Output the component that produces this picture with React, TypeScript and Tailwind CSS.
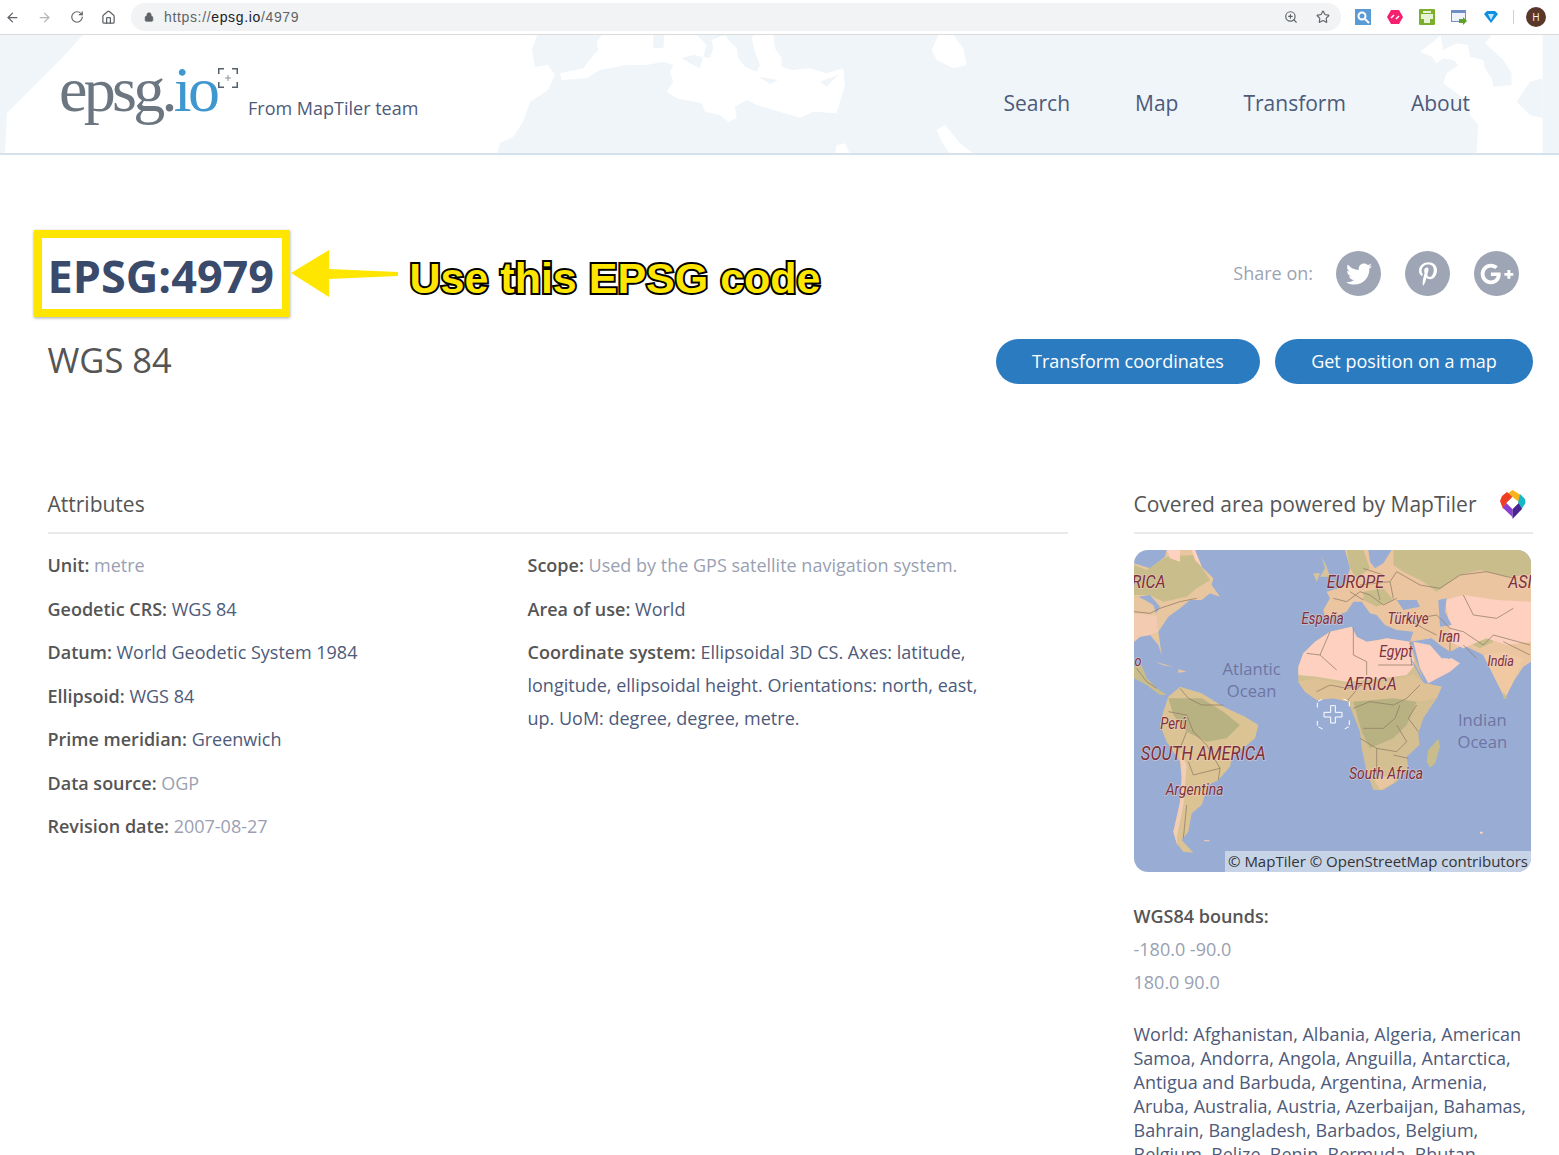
import React from "react";
import { ArrowLeft, ArrowRight, RotateCw, Home, Lock, ZoomIn, Star } from "lucide-react";
import { FaTwitter, FaPinterestP, FaGooglePlusG } from "react-icons/fa";

function BrowserBar() {
  return (
    <div className="flex h-[35px] items-center border-b border-[#d9dadc] bg-white pl-[5px]">
      <ArrowLeft size={15} className="shrink-0 text-[#5f6368]" />
      <ArrowRight size={15} className="ml-[17px] shrink-0 text-[#b4b6b9]" />
      <RotateCw size={14} className="ml-[18px] shrink-0 text-[#5f6368]" />
      <Home size={15} className="ml-[17px] shrink-0 text-[#5f6368]" />
      <div className="ml-[15px] flex h-[28px] w-[1210px] shrink-0 items-center rounded-full bg-[#f1f3f4] pl-[13px] pr-[11px]">
        <Lock size={10} fill="#5f6368" className="text-[#5f6368]" />
        <span className="ml-[10px] font-['Liberation_Sans',sans-serif] text-[14px] tracking-[0.65px] text-[#5f6368]">
          https://<span className="text-[#202124]">epsg.io</span>/4979
        </span>
        <ZoomIn size={14} className="ml-auto text-[#5f6368]" />
        <Star size={14} className="ml-[18px] text-[#5f6368]" />
      </div>
      <div className="ml-[14px] flex shrink-0 items-center gap-[16px]">
        <svg width="16" height="16" viewBox="0 0 16 16">
          <rect width="16" height="16" fill="#5b9bd5" />
          <circle cx="7" cy="7" r="3.5" fill="none" stroke="#fff" strokeWidth="2" />
          <path d="M10 10l4 4" stroke="#fff" strokeWidth="2" />
        </svg>
        <svg width="16" height="16" viewBox="0 0 16 16">
          <path d="M4 1h8l4 7-4 7H4L0 8z" fill="#f5206f" />
          <path d="M4 9l3-3M9 10l3-3" stroke="#fff" strokeWidth="1.5" />
        </svg>
        <svg width="16" height="16" viewBox="0 0 16 16">
          <rect width="16" height="16" rx="1" fill="#7cb02c" />
          <path d="M4 2h8v2H4zM2 5h12v5H2zM5 9h6v5H5z" fill="#e8f2d6" />
        </svg>
        <svg width="16" height="16" viewBox="0 0 16 16">
          <rect x="0.5" y="1.5" width="14" height="11" fill="#eef3fb" stroke="#6f8fc4" />
          <rect x="0.5" y="1.5" width="14" height="2.5" fill="#6f8fc4" />
          <path d="M8 10h4V8l4 4-4 4v-2H8z" fill="#5fa02f" />
        </svg>
        <svg width="16" height="16" viewBox="0 0 16 16">
          <path d="M1 5l3-3h8l3 3-7 9z" fill="#0e8fe0" />
          <path d="M5 5h6l-3 6z" fill="#bfe6ff" />
        </svg>
      </div>
      <div className="ml-[14px] h-[14px] w-px shrink-0 bg-[#d0d1d3]" />
      <div className="ml-[12px] flex h-[20px] w-[20px] shrink-0 items-center justify-center rounded-full bg-[#5a372b] text-[10px] text-white">
        H
      </div>
    </div>
  );
}

function HeaderBackdrop() {
  return (
    <svg className="absolute inset-0" width="1559" height="118" viewBox="0 0 1559 118">
      <g fill="#fff">
        <path d="M83 0H537L532 15 535 32 548 30 555 40 548 55 530 67 523 87 513 102 500 108 497 119H5L7 78 62 23z" />
        {/* these two are in 3x crop space, offset to the crop origin */}
        <g transform="translate(480 0) scale(0.3333)">
          <path d="M240 115L310 100 340 60 355 45 350 20 365 0H520V40H550L553 0H650L680 30 670 65 690 70 700 40 695 15 720 5 735 0 745 15 770 40 775 70 795 95 830 110 840 90 825 50 815 10 820 0H880L885 40 905 70 905 95 935 105 990 100 1040 115 1090 100 1095 150 1070 235 1000 230 960 248 880 225 830 210 800 195 765 215 770 250 745 260 720 240 675 230 665 205 590 190 560 170 580 140 570 110 580 90 550 80 500 90 440 90 360 105 320 130 245 135z" />
          <path d="M1375 0H1420L1450 40 1460 90 1420 100 1370 75 1355 45z" />
          <path d="M1370 285L1395 270 1420 300 1440 325 1480 356H1410L1385 320z" />
          <path d="M1065 356L1070 330 1095 325 1110 356z" />
          <path d="M605 68L640 60 668 66 660 100 630 85z" fill="#eff5f9" />
          <path d="M1020 140L1075 120 1040 155z" fill="#eff5f9" />
          <path d="M835 125L895 135 870 147z" fill="#eff5f9" />
        </g>
        <g transform="translate(1020 0) scale(0.3333)">
          <path d="M1415 0H1568V356H1370L1375 270 1350 240 1345 200 1270 145 1280 115 1315 90 1300 75 1270 70 1250 85 1235 65 1200 50 1240 20 1262 0 1270 45 1310 25 1345 30 1350 65 1390 75 1395 100 1415 130 1420 155 1475 150 1475 115 1450 75 1395 25z" />
          <path d="M1568 130L1530 140 1490 200 1530 240 1568 250z" fill="#eff5f9" />
        </g>
      </g>
    </svg>
  );
}

function SiteHeader() {
  return (
    <header className="relative flex h-[120px] items-start overflow-hidden border-b-2 border-[#d3e2ed] bg-[#eff5f9] pl-[59px] pr-[89px]">
      <HeaderBackdrop />
      <div className="relative mt-[23px] flex w-[159px] font-['Liberation_Serif',serif] text-[64px] leading-none tracking-[-3.7px]">
        <span className="text-[#6b7680]">epsg.</span>
        <span className="text-[#3f97cf]">io</span>
      </div>
      <svg className="relative mt-[33px]" width="20" height="20" viewBox="0 0 20 20">
        <path d="M0 6V0h6M14 0h6v6M20 14v6h-6M6 20H0v-6" fill="none" stroke="#55606b" strokeWidth="3" />
        <path d="M10 7v6M7 10h6" stroke="#8a949c" strokeWidth="1" />
      </svg>
      <span className="relative ml-[10px] mt-[61px] text-[18px] leading-[24px] text-[#4d5a7a]">From MapTiler team</span>
      <nav className="relative ml-auto mt-[53px] flex gap-[65px] text-[21px] leading-[30px] text-[#4d5a7a]">
        <span>Search</span>
        <span>Map</span>
        <span>Transform</span>
        <span>About</span>
      </nav>
    </header>
  );
}

function TitleRow() {
  return (
    <div className="flex justify-between pl-[47.5px] pr-[26px] pt-[91px]">
      <div>
        <div className="relative">
          <h1 className="text-[45px] font-bold leading-[60px] text-[#3a4a6b]">EPSG:4979</h1>
          <div className="absolute left-[-14px] top-[-16px] h-[87px] w-[256px] border-[8px] border-[#ffe600] shadow-[0_1px_3px_rgba(0,0,0,0.35)]" />
          <svg className="absolute left-[242px] top-[-16px]" width="112" height="88" viewBox="0 0 112 88">
            <path d="M1 43L39 20V39L108 42V46L39 49V67z" fill="#ffe600" />
          </svg>
          <span className="absolute left-[362px] top-[4px] whitespace-nowrap font-['Liberation_Sans',sans-serif] text-[43px] font-bold leading-[56px] text-[#ffe600] [-webkit-text-stroke:4px_#000] [paint-order:stroke_fill]">
            Use this EPSG code
          </span>
        </div>
        <h2 className="mt-[29px] text-[34.5px] leading-[50px] text-[#555]">WGS 84</h2>
      </div>
      <div className="flex flex-col items-end">
        <div className="mr-[14px] mt-[5px] flex items-center">
          <span className="mr-[23px] text-[18px] text-[#9ca3b3]">Share on:</span>
          <div className="flex h-[45px] w-[45px] items-center justify-center rounded-full bg-[#9ea5b4] text-white">
            <FaTwitter size={26} />
          </div>
          <div className="ml-[24px] flex h-[45px] w-[45px] items-center justify-center rounded-full bg-[#9ea5b4] text-white">
            <FaPinterestP size={24} />
          </div>
          <div className="ml-[24px] flex h-[45px] w-[45px] items-center justify-center rounded-full bg-[#9ea5b4] text-white">
            <FaGooglePlusG size={34} />
          </div>
        </div>
        <div className="mt-[43px] flex gap-[15px]">
          <button className="h-[45px] w-[264px] rounded-full bg-[#2b7bc0] text-[18px] text-white">Transform coordinates</button>
          <button className="h-[45px] w-[258px] rounded-full bg-[#2b7bc0] text-[18px] text-white">Get position on a map</button>
        </div>
      </div>
    </div>
  );
}

function Attr({ label, value, muted }: { label: string; value: React.ReactNode; muted?: boolean }) {
  return (
    <p className="mb-[10.5px] text-[18px] leading-[33px]">
      <span className="font-semibold text-[#555]">{label}:</span>{" "}
      <span className={muted ? "text-[#9a9fb2]" : "text-[#4d5a7a]"}>{value}</span>
    </p>
  );
}

function Attributes() {
  return (
    <section className="w-[1020px]">
      <h3 className="border-b-2 border-[#eaeaea] pb-[13px] text-[21px] leading-[30px] text-[#555]">Attributes</h3>
      <div className="mt-[15px] grid grid-cols-[480px_460px]">
        <div>
          <Attr label="Unit" value="metre" muted />
          <Attr label="Geodetic CRS" value="WGS 84" />
          <Attr label="Datum" value="World Geodetic System 1984" />
          <Attr label="Ellipsoid" value="WGS 84" />
          <Attr label="Prime meridian" value="Greenwich" />
          <Attr label="Data source" value="OGP" muted />
          <Attr label="Revision date" value="2007-08-27" muted />
        </div>
        <div>
          <Attr label="Scope" value="Used by the GPS satellite navigation system." muted />
          <Attr label="Area of use" value="World" />
          <Attr
            label="Coordinate system"
            value="Ellipsoidal 3D CS. Axes: latitude, longitude, ellipsoidal height. Orientations: north, east, up. UoM: degree, degree, metre."
          />
        </div>
      </div>
    </section>
  );
}

function PlaceLabel({ x, y, size, children }: { x: number; y: number; size: number; children: string }) {
  return (
    <text
      transform={`translate(${x} ${y}) scale(0.85 1)`}
      fontSize={size * 1.17}
      textAnchor="middle"
      fontFamily="Roboto, sans-serif"
      fontStyle="italic"
      fill="#7d2f3a"
      stroke="#f3d5cf"
      strokeWidth={5}
      strokeOpacity={0.55}
      paintOrder="stroke"
    >
      {children}
    </text>
  );
}

function OceanLabel({ x, y, children }: { x: number; y: number; children: string }) {
  return (
    <text x={x} y={y} fontSize={50} textAnchor="middle" fontFamily="'Open Sans', sans-serif" fill="#6f75a3">
      {children}
    </text>
  );
}

// coordinates are in the 3x crop space of the reference, hence the offset viewBox
function CoverageMap() {
  const tan = "#e8c69f";
  const green = "#c9bd8c";
  const forest = "#b8b283";
  const pink = "#fdd0bf";
  const sea = "#99add4";
  return (
    <div className="relative h-[322px] w-[397px] overflow-hidden rounded-[14px] bg-[#99add4]">
      <svg width="397" height="322" viewBox="12 195 1191 966">
        <g className="[filter:blur(0.4px)]">
          {/* north america */}
          <path d="M12 235L60 250 105 215 110 195H195L215 245 250 280 245 300 270 335 240 325 215 345 180 345 150 370 115 395 85 440 95 510 85 480 60 450 30 455 12 470z" fill={tan} />
          <path d="M50 255L110 215 190 210 240 285 200 310 170 335 100 350 60 330 12 330V240z" fill={green} />
          <path d="M110 195H150V230L120 220zM185 195H195L215 245 195 225z" fill={pink} />
          <path d="M12 385L80 392 85 440 60 450 30 455 12 470z" fill="#f2cbb0" />
          <path d="M25 335L60 330 90 365 78 385 70 360 45 345z" fill={sea} />
          <path d="M12 545L35 540 50 580 80 610 110 630 90 630 50 600 12 580z" fill={green} />
          <path d="M75 530L130 545 100 541zM145 553L170 560 145 563z" fill={tan} />
          {/* south america */}
          <path d="M115 635L150 605 215 625 280 665 345 695 385 720 375 760 340 790 310 800 300 845 265 885 235 900 215 960 185 985 175 1040 155 1065 190 1103 160 1100 140 1075 130 1040 150 960 155 880 150 830 110 770 90 720 100 680z" fill="#dcc393" />
          <path d="M115 640L215 640 280 680 330 720 290 760 230 770 170 740 130 690z" fill={forest} />
          <path d="M150 800L170 840 160 960 140 1060 143 1085 130 1040 150 950 155 880z" fill="#f3cdb4" />
          {/* africa */}
          <path d="M505 545L520 505 555 470 600 440 665 425 680 455 710 470 745 465 770 460 840 470 860 530 885 595 935 605 920 640 880 700 865 745 868 780 830 815 835 850 800 890 760 915 730 915 710 860 695 790 690 740 670 690 655 650 610 640 560 645 525 620 505 590z" fill="#d3bf92" />
          <path d="M505 590L560 580 650 600 760 590 850 570 885 595 935 605 920 640 860 650 790 640 670 650 655 650 610 640 560 645 525 620z" fill="#dfc196" />
          <path d="M505 545L520 505 555 470 600 440 665 425 680 455 710 470 745 465 770 460 840 470 855 540 830 570 760 580 650 590 560 575 505 570z" fill={pink} />
          <path d="M670 650L790 640 860 650 830 720 790 760 720 790 695 740z" fill={forest} />
          <path d="M730 880L800 870 790 895 750 915z" fill={tan} />
          <path d="M890 830L895 795 925 762 930 785 915 835 900 848z" fill={green} />
          {/* eurasia */}
          <path d="M580 375L600 340 590 320 640 305 650 285 660 250 645 195H1203V530L1180 545 1150 590 1125 640 1110 610 1085 560 1060 510 1000 480 960 500 930 480 905 460 840 470 850 440 800 435 765 420 740 390 720 385 695 350 670 350 650 380 610 395 585 395z" fill="#ebc5a0" />
          <path d="M790 195H1203V270L1130 275 1050 255 990 270 920 320 880 290 820 260 790 240z" fill={green} />
          <path d="M650 195H700L720 250 680 280 660 250z" fill={green} />
          <path d="M700 320L760 310 790 345 740 365 700 345zM1000 430L1070 440 1090 470 1050 490 1010 470z" fill={green} />
          <path d="M945 345L1000 330 1100 345 1203 350V470L1130 480 1070 460 1000 490 960 470 960 430z" fill={pink} />
          <path d="M850 470L900 480 935 520 965 520 990 535 960 560 895 595 870 550z" fill={pink} />
          <path d="M1060 510L1120 500 1180 520 1150 590 1125 640 1110 610 1085 560z" fill="#f0c8a2" />
          <path d="M1120 620L1132 640 1120 642z" fill={green} />
          <path d="M715 195H785L760 235 735 250 720 230zM800 345L860 345 870 365 820 375zM925 345L950 340 945 380 965 420 930 425zM840 520L850 530 888 597 878 590z" fill={sea} />
          <path d="M920 482L965 518 955 522 915 490z" fill={sea} />
          <path d="M575 215L590 245 600 275 570 275 585 250zM550 265L570 265 560 290z" fill="#d8c39a" />
          <path d="M1050 1040h8v6h-8zM222 1066h16v3h-16z" fill={pink} />
          {/* borders */}
          <path
            d="M600 440L570 510 620 555M530 505L570 510M670 430L670 510 710 530 710 570M745 540L850 540M840 470L845 540M560 620L600 600 650 610 700 600M650 650L700 590M670 670L720 650 790 660 830 640 870 600M700 730L760 730 795 700 810 660M800 720L830 770 800 800 740 790 690 760M740 790L740 880M835 820L790 810M860 660L835 700 865 740M150 610L175 640 215 660 280 660M115 680L170 690 190 740 230 780 270 850 230 860 190 870 175 830M170 740L150 790M270 850L265 885M170 960L160 1060M12 380L60 385 90 370 150 350 200 340M20 550L50 590 80 610M610 340L650 350 690 320 720 330 760 360 800 340M690 300L780 290 800 260 870 300 930 310 990 270 1070 260 1130 275 1160 280M860 400L920 390 960 430 1000 440 1060 480 1090 450 1200 480M1000 330L1030 390 1100 400 1150 370M960 500L960 450M1000 480L1040 520M1120 470L1180 500 1200 510M830 400L880 430 920 450M660 320L700 345M740 305L750 345M700 250L760 270M780 290L790 340"
            fill="none"
            stroke="#8f7a66"
            strokeWidth="2.2"
          />
        </g>
        <PlaceLabel x={56} y={310} size={48}>RICA</PlaceLabel>
        <PlaceLabel x={676} y={310} size={48}>EUROPE</PlaceLabel>
        <PlaceLabel x={1170} y={308} size={48}>ASI</PlaceLabel>
        <PlaceLabel x={578} y={416} size={40}>España</PlaceLabel>
        <PlaceLabel x={834} y={418} size={40}>Türkiye</PlaceLabel>
        <PlaceLabel x={958} y={470} size={40}>Iran</PlaceLabel>
        <PlaceLabel x={798} y={516} size={42}>Egypt</PlaceLabel>
        <PlaceLabel x={1112} y={544} size={38}>India</PlaceLabel>
        <PlaceLabel x={722} y={616} size={48}>AFRICA</PlaceLabel>
        <PlaceLabel x={24} y={544} size={38}>o</PlaceLabel>
        <PlaceLabel x={130} y={732} size={40}>Perú</PlaceLabel>
        <PlaceLabel x={220} y={826} size={50}>SOUTH AMERICA</PlaceLabel>
        <PlaceLabel x={194} y={930} size={42}>Argentina</PlaceLabel>
        <PlaceLabel x={768} y={882} size={42}>South Africa</PlaceLabel>
        <OceanLabel x={365} y={570}>Atlantic</OceanLabel>
        <OceanLabel x={365} y={636}>Ocean</OceanLabel>
        <OceanLabel x={1057} y={722}>Indian</OceanLabel>
        <OceanLabel x={1057} y={788}>Ocean</OceanLabel>
        {/* centre marker */}
        <path d="M562 668v-18l16-8M640 642l18 8v18M658 706v18l-18 10M578 732l-16-8v-18" fill="none" stroke="#fff" strokeWidth="3" strokeDasharray="14 6" />
        <path d="M602 662h14v20h20v14h-20v18h-14v-18h-20v-14h20z" fill="none" stroke="#fff" strokeWidth="3" />
      </svg>
      <div className="absolute bottom-0 right-0 flex h-[21px] w-[306px] items-center justify-end bg-[#c7d3e7] pr-[3px] text-[15px] leading-none text-[#333]">
        © MapTiler © OpenStreetMap contributors
      </div>
    </div>
  );
}

function Coverage() {
  return (
    <section className="w-[399.5px]">
      <div className="flex h-[45px] items-start justify-between border-b-2 border-[#eaeaea] pr-[7px]">
        <h3 className="text-[21px] leading-[30px] text-[#555]">Covered area powered by MapTiler</h3>
        <svg width="27" height="30" viewBox="0 0 27 30" strokeLinejoin="round">
          <path d="M13.5 1L21 5.5 26 11 20 13 13.5 8 8 5z" fill="#f7b31c" />
          <path d="M8 3L13.5 8 7.5 14 4 20 1 12 3 7z" fill="#ef3f23" />
          <path d="M21 5L26 10 26.5 14 22 21 19 14z" fill="#17b7c6" />
          <path d="M7.5 14L13.5 20 13.5 28 4 19z" fill="#8a3fd1" />
          <path d="M19.5 14L23 20 13.5 30 13.5 20z" fill="#4a2591" />
          <path d="M13.5 8L19.5 14 13.5 20 7.5 14z" fill="#fff" />
        </svg>
      </div>
      <div className="ml-[0.5px] mt-[16px]">
        <CoverageMap />
      </div>
      <p className="mt-[28px] text-[18px] font-semibold leading-[33px] text-[#555]">WGS84 bounds:</p>
      <p className="text-[18px] leading-[33px] text-[#9a9fb2]">-180.0 -90.0</p>
      <p className="text-[18px] leading-[33px] text-[#9a9fb2]">180.0 90.0</p>
      <p className="mt-[23px] text-[18px] leading-[24px] text-[#4d5a7a]">
        World: Afghanistan, Albania, Algeria, American Samoa, Andorra, Angola, Anguilla, Antarctica, Antigua and Barbuda,
        Argentina, Armenia, Aruba, Australia, Austria, Azerbaijan, Bahamas, Bahrain, Bangladesh, Barbados, Belgium, Belgium,
        Belize, Benin, Bermuda, Bhutan
      </p>
    </section>
  );
}

export default function App() {
  return (
    <div className="h-[1155px] overflow-hidden bg-white font-['Open_Sans',sans-serif]">
      <BrowserBar />
      <SiteHeader />
      <TitleRow />
      <div className="mt-[104px] flex gap-[66px] pl-[47.5px] pr-[26px]">
        <Attributes />
        <Coverage />
      </div>
    </div>
  );
}
